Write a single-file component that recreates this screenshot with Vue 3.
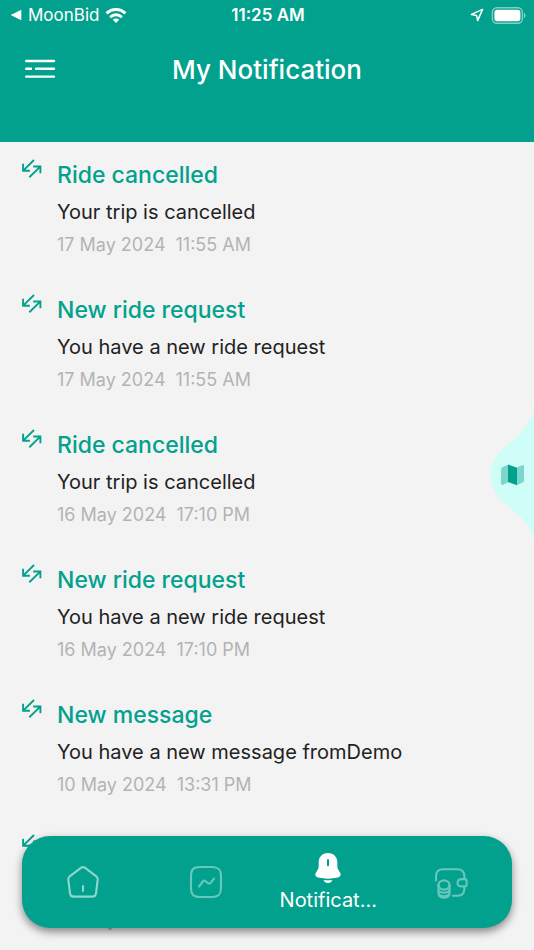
<script setup>
import { ref } from 'vue'

const notifications = [
  { title: 'Ride cancelled', text: 'Your trip is cancelled', date: '17 May 2024', time: '11:55 AM' },
  { title: 'New ride request', text: 'You have a new ride request', date: '17 May 2024', time: '11:55 AM' },
  { title: 'Ride cancelled', text: 'Your trip is cancelled', date: '16 May 2024', time: '17:10 PM' },
  { title: 'New ride request', text: 'You have a new ride request', date: '16 May 2024', time: '17:10 PM' },
  { title: 'New message', text: 'You have a new message fromDemo', date: '10 May 2024', time: '13:31 PM' },
  { title: 'Ride cancelled', text: 'Your trip is cancelled', date: '10 May 2024', time: '13:31 PM' }
]
const active = ref('notifications')
</script>

<template>
  <div class="screen">
    <header class="header">
      <div class="status">
        <a class="back" href="#">
          <svg width="12" height="12" viewBox="0 0 12 12" aria-hidden="true"><path d="M11.3 0.8v10.4L0.7 6z" fill="#fff" /></svg>
          <span>MoonBid</span>
          <svg class="wifi" width="22" height="17" viewBox="0 0 22 17" aria-hidden="true">
            <g fill="none" stroke="#fff" stroke-width="3">
              <path d="M1.6 6.4a13.4 13.4 0 0 1 18.8 0" />
              <path d="M5.2 10.2a8.2 8.2 0 0 1 11.6 0" />
            </g>
            <path d="M11 16l-3.2-3.3a4.6 4.6 0 0 1 6.4 0z" fill="#fff" />
          </svg>
        </a>
        <span class="clock">11:25 AM</span>
        <span class="indicators">
          <svg width="14" height="14" viewBox="0 0 14 14" aria-hidden="true">
            <path d="M12.6 1.4L1.4 6.4l5.2 1 1 5.2z" fill="none" stroke="#fff" stroke-width="1.5" stroke-linejoin="round" />
          </svg>
          <svg width="35" height="17" viewBox="0 0 35 17" aria-hidden="true">
            <rect x="1.4" y="0.8" width="30" height="15.4" rx="4.5" fill="none" stroke="#fff" stroke-opacity=".5" stroke-width="1.4" />
            <rect x="3.4" y="2.8" width="26" height="11.4" rx="2.6" fill="#fff" />
            <path d="M33 5.8v5.4c2-.8 2-4.6 0-5.4z" fill="#fff" fill-opacity=".5" />
          </svg>
        </span>
      </div>
      <div class="titlebar">
        <button class="menu" type="button" aria-label="Menu">
          <svg width="32" height="20" viewBox="0 0 32 20" aria-hidden="true">
            <path d="M2.200 2h27.800M2.200 9.800h4.800M12 9.800h18M2.200 17.600h27.800" stroke="#fff" stroke-width="2.4" stroke-linecap="round" />
          </svg>
        </button>
        <h1>My Notification</h1>
      </div>
    </header>

    <main class="list">
      <article v-for="(n, i) in notifications" :key="i" class="item">
        <svg class="swap" width="20" height="20" viewBox="0 0 20 20" aria-hidden="true">
          <path d="M12 1L1.400 11.400M1.100 4.800v6.900h6.800M7.300 18.200L18 7.900M11.200 7.500h7.200v6.800" />
        </svg>
        <div class="copy">
          <h2>{{ n.title }}</h2>
          <p>{{ n.text }}</p>
          <time><span>{{ n.date }}</span><span>{{ n.time }}</span></time>
        </div>
      </article>
    </main>

    <button class="map" type="button" aria-label="Map">
      <svg width="44" height="128" viewBox="0 0 44 128" aria-hidden="true">
        <path d="M44 1C36 17 30 24 20 32C-6 50 -6 78 20 97C30 104 36 110 44 127z" fill="#cffdf7" />
        <path d="M11 58.200q0-1.400 1.300-2L18 53.800v17.600l-5.200 2.400q-1.800.6-1.800-1.200zM27 56.600l5.200-2.400q1.800-.6 1.800 1.200v14q0 1.400-1.300 2L27 74z" fill="#7fd5cb" />
        <path d="M18 53.600l9 3.200v17.400l-9-3.200z" fill="#02a18d" />
      </svg>
    </button>

    <nav class="tabs">
      <button type="button" aria-label="Home" :class="{ on: active === 'home' }" @click="active = 'home'">
        <svg width="34" height="34" viewBox="0 0 34 34" aria-hidden="true">
          <path d="M15.200 2.700q1.800-1.200 3.600 0l11.500 8.600q1.700 1.300 1.400 3.400l-1.700 13.600q-.4 3.300-3.700 3.300H7.700q-3.300 0-3.700-3.300L2.300 14.700q-.3-2.100 1.400-3.400zM17 21v5" />
        </svg>
      </button>
      <button type="button" aria-label="Activity" class="dim" :class="{ on: active === 'activity' }" @click="active = 'activity'">
        <svg width="34" height="34" viewBox="0 0 34 34" aria-hidden="true">
          <path d="M11 2h12c6.500 0 9 2.500 9 9v12c0 6.500-2.500 9-9 9H11c-6.500 0-9-2.500-9-9V11c0-6.500 2.500-9 9-9zM10 21.500l3.800-5q1.300-1.600 2.900-.3l2.300 1.900q1.600 1.200 2.900-.4l3.200-4.200" />
        </svg>
      </button>
      <button type="button" class="labelled" :class="{ on: active === 'notifications' }" @click="active = 'notifications'">
        <svg class="bell" width="28" height="32" viewBox="0 0 28 32" aria-hidden="true">
          <path class="solid" d="M14 1C8.300 1 4.700 5 4.700 10v4.600q0 1.600-.9 3L2 20.600c-1.600 2.700-.2 4.300 2.200 5 6.400 1.500 13.200 1.500 19.600 0 2.500-.7 3.700-2.600 2.200-5l-1.800-3q-.9-1.400-.9-3V10C23.300 5 19.700 1 14 1z" />
          <path class="solid" d="M9.600 28q4.400.6 8.800 0c-.6 1.800-2.300 3-4.400 3s-3.800-1.200-4.400-3z" />
          <path class="slot" d="M14 8v5.200" />
        </svg>
        <span>Notificat...</span>
      </button>
      <button type="button" aria-label="Wallet" class="dim" :class="{ on: active === 'wallet' }" @click="active = 'wallet'">
        <svg width="34" height="34" viewBox="0 0 34 34" aria-hidden="true">
          <path d="M2 15.500V11.500q0-7.200 7.200-7.200h14q7.200 0 7.200 7v2.800h-2.500q-4.400 0-4.400 3.700t4.400 3.700h2.500v2.300q0 6.900-7 6.900H18.800" />
          <path d="M29.800 14.100h1.200q1.600.1 1.600 1.500v4.400q0 1.400-1.600 1.500h-1.200" />
          <ellipse cx="10" cy="20" rx="5.600" ry="4.600" />
          <path d="M4.400 20v8.200c0 6 11.200 6 11.200 0V20M4.400 24c0 5 11.200 5 11.200 0M4.400 27.500c0 5 11.200 5 11.200 0" />
        </svg>
      </button>
    </nav>
  </div>
</template>

<style>
body {
  margin: 0;
  background: #f3f3f3;
}
</style>

<style scoped>
.screen {
  position: relative;
  display: flex;
  flex-direction: column;
  height: 100vh;
  overflow: hidden;
  background: #f3f3f3;
  font-family: Inter, "Liberation Sans", sans-serif;
}
button {
  padding: 0;
  border: 0;
  background: none;
  font: inherit;
  color: inherit;
  cursor: pointer;
}
svg {
  display: block;
  flex: none;
}
.header {
  flex: none;
  padding-bottom: 34px;
  background: #02a18d;
  color: #fff;
}
.status {
  display: grid;
  grid-template-columns: 1fr auto 1fr;
  align-items: center;
  height: 30px;
  padding: 0 8px 0 10px;
  font-size: 17px;
}
.back {
  display: flex;
  align-items: center;
  gap: 6px;
  color: #fff;
  text-decoration: none;
}
.clock {
  font-weight: 600;
}
.indicators {
  display: flex;
  justify-content: flex-end;
  align-items: center;
  gap: 7px;
}
.titlebar {
  display: grid;
  grid-template-columns: 1fr auto 1fr;
  align-items: center;
  height: 78px;
  padding: 0 24px;
}
.menu {
  justify-self: start;
}
h1 {
  margin: 0;
  font-size: 26px;
  font-weight: 500;
}
.list {
  flex: 1;
  min-height: 0;
  padding-top: 1px;
  overflow-y: auto;
  scrollbar-width: none;
}
.item {
  display: flex;
  gap: 15px;
  padding: 14px 22px 19px;
}
.swap {
  margin-top: 2px;
  fill: none;
  stroke: #02a18d;
  stroke-width: 1.9;
}
h2 {
  margin: 0;
  font-size: 23px;
  font-weight: 500;
  line-height: 36px;
  color: #02a18d;
}
p {
  margin: 0;
  font-size: 20px;
  line-height: 38px;
  color: #222;
}
time {
  display: flex;
  gap: 10px;
  font-size: 18px;
  line-height: 28px;
  color: #b3b3b3;
}
.map {
  position: absolute;
  right: 0;
  top: 50%;
  transform: translateY(-50%);
}
.tabs {
  position: absolute;
  left: 22px;
  right: 22px;
  bottom: 22px;
  display: grid;
  grid-template-columns: repeat(4, 1fr);
  height: 92px;
  border-radius: 28px;
  background: #02a18d;
  box-shadow: 0 4px 8px rgba(0, 0, 0, 0.45);
  color: #fff;
}
.tabs button {
  display: flex;
  flex-direction: column;
  align-items: center;
  justify-content: center;
  min-width: 0;
}
.tabs .labelled {
  padding-top: 4px;
}
.tabs svg {
  fill: none;
  stroke: #8fd6cd;
  stroke-width: 2.1;
  stroke-linecap: round;
  stroke-linejoin: round;
}
.tabs .dim svg {
  stroke: #67c7bb;
}
.tabs .on svg {
  stroke: #fff;
}
.tabs span {
  font-size: 20px;
  line-height: 32px;
}
.tabs .solid {
  fill: #fff;
  stroke: none;
}
.tabs .slot {
  stroke: #02a18d;
  stroke-width: 2;
}
</style>
